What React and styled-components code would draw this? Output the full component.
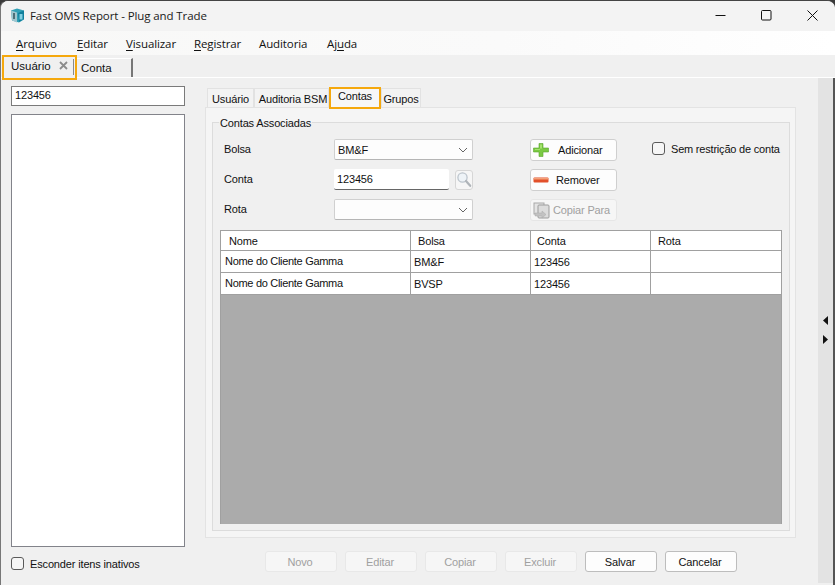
import React from "react";
import styled, { createGlobalStyle } from "styled-components";

const Global = createGlobalStyle`
  html, body { margin: 0; padding: 0; background: #3a3a3a; }
  body { width: 835px; height: 585px; overflow: hidden; font-family: "Liberation Sans", Arial, sans-serif; font-size: 11px; letter-spacing: -0.15px; color: #111; white-space: nowrap; }
  * { box-sizing: border-box; }
`;

const Window = styled.div`
  width: 835px; height: 585px; display: flex; flex-direction: column;
  background: #f0f0f0; border-top: 1px solid #444; border-left: 1px solid #777; border-radius: 8px 8px 0 0; overflow: hidden;
`;
const TitleBar = styled.div`
  height: 30px; flex: none; display: flex; align-items: center; background: #f3f3f3; padding: 0 0 2px 9px;
  font-family: "Open Sans", sans-serif; font-size: 11.5px;
`;
const TitleText = styled.span`
  margin-left: 5px; flex: 1; letter-spacing: -0.1px; color: #1a1a1a;
`;
const Caption = styled.button`
  width: 46px; height: 28px; border: 0; background: transparent; padding: 0; display: flex; align-items: center; justify-content: center;
`;
const MenuBar = styled.div`
  height: 24px; flex: none; display: flex; align-items: center; padding-left: 15px;
  font-family: "Open Sans", sans-serif; font-size: 11.5px;
  background: linear-gradient(90deg, #f8f8f7 0%, #fafafa 60%, #ffffff 100%);
`;
const MenuItem = styled.span`
  width: ${p => p.$w}px; letter-spacing: -0.1px; u { text-underline-offset: 2px; }
`;
const TabStrip = styled.div`
  height: 23px; flex: none; display: flex; align-items: flex-start; background: #f0f0f0; border-bottom: 1px solid #fff; padding-left: 1px;
  font-size: 11.5px; letter-spacing: 0;
`;
const DocTabActive = styled.div`
  width: 75px; height: 25px; border: 2px solid #f5a80d; position: relative; z-index: 2;
  display: flex; align-items: center; padding: 0 0 4px 7px; gap: 8px; background: #f0f0f0;
  &::after { content: ""; position: absolute; right: 1px; top: 2px; bottom: 3px; width: 1px; background: #8a8a8a; }
`;
const DocTab = styled.div`
  width: 56px; height: 19px; margin-top: 3px; padding: 1px 0 0 4px; border-top: 1px solid #fff; border-right: 2px solid #777;
  line-height: 17px;
`;
const Body = styled.div`
  flex: 1; min-height: 0; display: flex; border-right: 2px solid #555;
`;
const LeftPane = styled.div`
  width: 204px; flex: none; padding: 8px 20px 0 10px; display: flex; flex-direction: column;
`;
const SearchBox = styled.div`
  height: 20px; flex: none; background: #fff; border: 1px solid #7a7a7a; padding-left: 3px; line-height: 17px;
`;
const ListBox = styled.div`
  height: 433px; flex: none; margin-top: 8px; background: #fff; border: 1px solid #82838a;
`;
const CheckRow = styled.label`
  display: flex; align-items: center; gap: 6px;
  margin-top: ${p => p.$mt || 0}px;
`;
const CheckBox = styled.span`
  width: 13px; height: 13px; flex: none; background: #f6f6f6; border: 1px solid #5a5a5a; border-radius: 3px;
`;
const Main = styled.div`
  width: 612px; flex: none; display: flex; flex-direction: column; padding-top: 10px;
`;
const TabRow = styled.div`
  height: 19px; flex: none; display: flex; align-items: flex-end; padding-left: 2px; position: relative; z-index: 1;
`;
const InnerTab = styled.div`
  width: ${p => p.$w}px; height: 19px; text-align: center; line-height: 20px; background: #f3f3f3; padding-left: ${p => p.$pl || 0}px;
  border: 1px solid #e2e2e2; border-bottom: 0; margin-right: ${p => p.$mr || 0}px;
`;
const InnerTabActive = styled.div`
  width: 52px; height: 22px; margin: 0 0 -2px 0; text-align: center; line-height: 15px; background: #f7f7f7;
  border: 2px solid #f5a80d;
`;
const Panel = styled.div`
  width: 591px; height: 431px; flex: none; background: #f5f5f5; border: 1px solid #e3e3e3; padding: 7px 5px 6px 6px;
`;
const Group = styled.fieldset`
  margin: 0; padding: 0 7px 5px 7px; height: 416px; border: 1px solid #dcdcdc; background: #f0f0f0; min-width: 0;
  display: flex; flex-direction: column;
`;
const Legend = styled.legend`
  padding: 2px 1px 0; margin-left: -1px; line-height: 13px;
`;
const FormArea = styled.div`
  height: 91px; flex: none; margin-top: 9px; display: flex;
`;
const FormFields = styled.div`
  width: 253px; flex: none; padding-left: 4px; display: flex; flex-direction: column; gap: 9px;
`;
const FieldRow = styled.div`
  height: 21px; display: flex; align-items: center;
`;
const FieldLabel = styled.span`
  width: 110px; flex: none; padding-bottom: 1px;
`;
const Select = styled.div`
  width: 139px; height: 21px; background: #fdfdfd; border: 1px solid #d0d0d0; border-radius: 2px; display: flex; align-items: center;
  justify-content: space-between; padding: 0 4px 0 3px; border-bottom-color: #b5b5b5;
`;
const TextField = styled.div`
  width: 116px; height: 21px; background: #fff; border-bottom: 1px solid #666; border-radius: 2px; padding-left: 3px; line-height: 21px;
`;
const LensButton = styled.div`
  width: 18px; height: 20px; margin-left: 6px; background: #f6f6f6; border: 1px solid #d6d6d6; border-radius: 3px;
  display: flex; align-items: center; justify-content: center;
`;
const ActionCol = styled.div`
  width: 87px; margin-left: 57px; flex: none; display: flex; flex-direction: column; gap: 8px;
`;
const ActionButton = styled.div`
  height: 22px; display: flex; align-items: center; padding-left: 2px; gap: ${p => p.$gap}px; border-radius: 3px;
  background: ${p => p.$off ? "#f6f6f6" : "#fdfdfd"}; border: 1px solid ${p => p.$off ? "#e6e6e6" : "#cfcfcf"};
  color: ${p => p.$off ? "#a0a0a0" : "#111"};
`;
const RestrictCol = styled.div`
  margin-left: 35px; padding-top: 3px; letter-spacing: -0.2px;
`;
const GridBox = styled.div`
  height: 294px; flex: none; background: #ababab; border: 1px solid #a0a0a0; border-bottom: 0;
`;
const GridRow = styled.div`
  height: ${p => p.$h}px; display: grid; grid-template-columns: 190px 120px 120px 130px; background: #fff; border-bottom: 1px solid #a0a0a0;
`;
const Cell = styled.div`
  border-right: 1px solid #a0a0a0; padding-left: ${p => p.$pad}px; line-height: ${p => p.$lh || 20}px;
  letter-spacing: ${p => p.$ls ?? -0.15}px;
  &:last-child { border-right: 0; }
`;
const Footer = styled.div`
  display: flex; gap: 8px; margin-top: 13px; padding-left: 60px;
`;
const FootButton = styled.div`
  width: 72px; height: 21px; text-align: center; line-height: 20px; border-radius: 3px; padding-right: 2px;
  background: ${p => p.$off ? "#f6f6f6" : "#fdfdfd"}; border: 1px solid ${p => p.$off ? "#e8e8e8" : "#bdbdbd"};
  color: ${p => p.$off ? "#a0a0a0" : "#111"};
`;
const Rail = styled.div`
  width: 15px; flex: none; margin: 0 0 2px 1px; background: #e3e3e3; display: flex; flex-direction: column; align-items: center; justify-content: center; gap: 10px; padding-bottom: 1px;
`;

const Chevron = () => (
  <svg width="10" height="6" viewBox="0 0 10 6"><path d="M1 1l4 4 4-4" fill="none" stroke="#666" strokeWidth="1" /></svg>
);
const Logo = () => (
  <svg width="15" height="15" viewBox="0 0 15 15">
    <path d="M1 2.5L7 0.5l7 2v9l-5 3-7-2z" fill="#2f9fb5" />
    <path d="M1 2.5l6 2v10l-5-2z" fill="#9fc6cf" />
    <path d="M8 5l6-2.5V11l-5 3z" fill="#0f7f9c" />
    <path d="M9.5 6h3v5.5h-3z" fill="#7fd0e2" />
    <path d="M3 5h2v6H3z" fill="#4d6f78" />
  </svg>
);
const Lens = () => (
  <svg width="16" height="17" viewBox="0 0 16 17">
    <circle cx="6.5" cy="6.5" r="4.6" fill="#eef3f7" stroke="#bcc4cc" strokeWidth="1.3" />
    <path d="M10 10l4.2 4.8" stroke="#b0b5ba" strokeWidth="2.2" strokeLinecap="round" />
  </svg>
);
const Plus = () => (
  <svg width="16" height="14" viewBox="0 0 16 14">
    <path d="M6 0.5h4v4.5h5.5v4H10v4.5H6V9H0.5V5H6z" fill="#7ac943" stroke="#5ba52e" strokeWidth="0.6" />
    <path d="M7 1.5h2v4H7zM2 6h5v1H2z" fill="#a6e36f" />
  </svg>
);
const Minus = () => (
  <svg width="16" height="6" viewBox="0 0 16 6">
    <rect x="0.5" y="0.5" width="15" height="5" rx="1" fill="#e2502a" />
    <rect x="1" y="1" width="14" height="1.5" fill="#f4a178" />
  </svg>
);
const CopyIcon = () => (
  <svg width="17" height="17" viewBox="0 0 17 17">
    <rect x="1" y="1" width="10" height="11" fill="#e4e4e4" stroke="#a8a8a8" />
    <rect x="5" y="3" width="11" height="13" rx="1" fill="#dcdcdc" stroke="#9c9c9c" />
    <path d="M2 11h7v-2l4 3.5-4 3.5v-2H2z" fill="#c2c2c2" stroke="#aaa" strokeWidth="0.5" />
  </svg>
);

const bottom = [["Novo", true], ["Editar", true], ["Copiar", true], ["Excluir", true], ["Salvar", false], ["Cancelar", false]];

export default function App() {
  return (
    <>
      <Global />
      <Window>
        <TitleBar>
          <Logo />
          <TitleText>Fast OMS Report - Plug and Trade</TitleText>
          <Caption>
            <svg width="11" height="11" viewBox="0 0 11 11"><path d="M0.5 5.5h10" stroke="#111" /></svg>
          </Caption>
          <Caption>
            <svg width="11" height="11" viewBox="0 0 11 11"><rect x="0.5" y="0.5" width="9.5" height="9.5" rx="1" fill="none" stroke="#111" /></svg>
          </Caption>
          <Caption>
            <svg width="11" height="11" viewBox="0 0 11 11"><path d="M0.5 0.5l10 10M10.5 0.5l-10 10" stroke="#111" /></svg>
          </Caption>
        </TitleBar>
        <MenuBar>
          <MenuItem $w={61}><u>A</u>rquivo</MenuItem>
          <MenuItem $w={49}><u>E</u>ditar</MenuItem>
          <MenuItem $w={68}><u>V</u>isualizar</MenuItem>
          <MenuItem $w={65}><u>R</u>egistrar</MenuItem>
          <MenuItem $w={68}>Auditoria</MenuItem>
          <MenuItem $w={50}>Aj<u>u</u>da</MenuItem>
        </MenuBar>
        <TabStrip>
          <DocTabActive>
            Usuário
            <svg width="9" height="9" viewBox="0 0 9 9"><path d="M1 1l7 7M8 1l-7 7" stroke="#8c8c8c" strokeWidth="1.8" /></svg>
          </DocTabActive>
          <DocTab>Conta</DocTab>
        </TabStrip>
        <Body>
          <LeftPane>
            <SearchBox>123456</SearchBox>
            <ListBox />
            <CheckRow $mt={10}><CheckBox />Esconder itens inativos</CheckRow>
          </LeftPane>
          <Main>
            <TabRow>
              <InnerTab $w={47}>Usuário</InnerTab>
              <InnerTab $w={75} $pl={3}>Auditoria BSM</InnerTab>
              <InnerTabActive>Contas</InnerTabActive>
              <InnerTab $w={40}>Grupos</InnerTab>
            </TabRow>
            <Panel>
              <Group>
                <Legend>Contas Associadas</Legend>
                <FormArea>
                  <FormFields>
                    <FieldRow><FieldLabel>Bolsa</FieldLabel><Select>BM&amp;F<Chevron /></Select></FieldRow>
                    <FieldRow><FieldLabel>Conta</FieldLabel><TextField>123456</TextField><LensButton><Lens /></LensButton></FieldRow>
                    <FieldRow><FieldLabel>Rota</FieldLabel><Select><span /><Chevron /></Select></FieldRow>
                  </FormFields>
                  <ActionCol>
                    <ActionButton $gap={9}><Plus />Adicionar</ActionButton>
                    <ActionButton $gap={7}><Minus />Remover</ActionButton>
                    <ActionButton $off $gap={3}><CopyIcon />Copiar Para</ActionButton>
                  </ActionCol>
                  <RestrictCol>
                    <CheckRow><CheckBox />Sem restrição de conta</CheckRow>
                  </RestrictCol>
                </FormArea>
                <GridBox>
                  <GridRow $h={20}>
                    <Cell $pad={8}>Nome</Cell><Cell $pad={7}>Bolsa</Cell><Cell $pad={6}>Conta</Cell><Cell $pad={7}>Rota</Cell>
                  </GridRow>
                  {["BM&F", "BVSP"].map(b => (
                    <GridRow $h={22} key={b}>
                      <Cell $pad={4} $lh={21} $ls={-0.3}>Nome do Cliente Gamma</Cell><Cell $pad={3} $lh={22}>{b}</Cell><Cell $pad={3} $lh={22}>123456</Cell><Cell $pad={3} />
                    </GridRow>
                  ))}
                </GridBox>
              </Group>
            </Panel>
            <Footer>
              {bottom.map(([t, off]) => <FootButton key={t} $off={off}>{t}</FootButton>)}
            </Footer>
          </Main>
          <Rail>
            <svg width="5" height="9" viewBox="0 0 5 9"><path d="M5 0v9L0 4.5z" fill="#111" /></svg>
            <svg width="5" height="9" viewBox="0 0 5 9"><path d="M0 0v9l5-4.5z" fill="#111" /></svg>
          </Rail>
        </Body>
      </Window>
    </>
  );
}
